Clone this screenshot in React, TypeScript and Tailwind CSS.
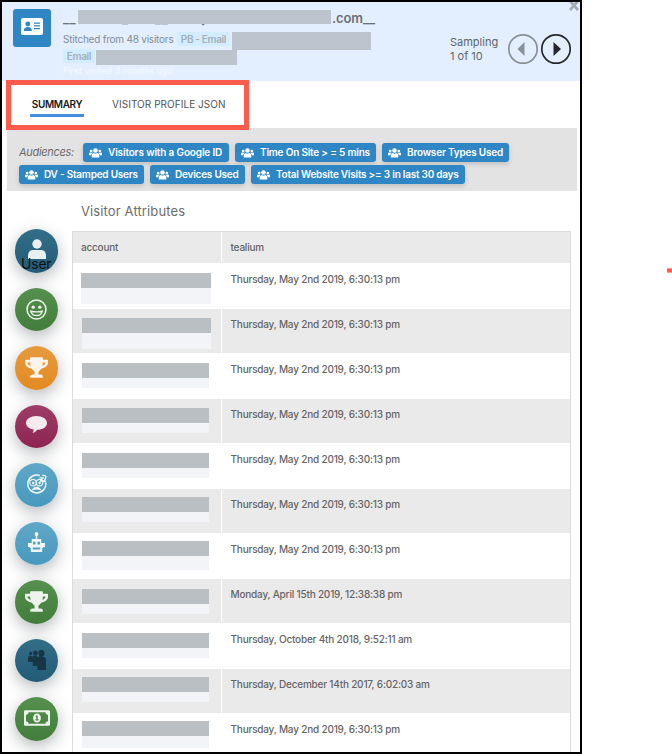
import React from "react";
import { FaRegMoneyBillAlt, FaTrophy } from "react-icons/fa";

const UsersIcon = () => (
  <svg width="13" height="10" viewBox="0 0 26 20" fill="currentColor" className="shrink-0">
    <circle cx="13" cy="5" r="4.6" />
    <path d="M5.5 19v-3.500c0-3.600 2-5.300 4.500-5.300 1.700 1.400 4.300 1.400 6 0 2.500 0 4.500 1.700 4.500 5.300V19z" />
    <circle cx="4.300" cy="6" r="2.700" />
    <circle cx="21.700" cy="6" r="2.700" />
    <path d="M0 14.500V12c0-2 1-3 2.500-3 1.200.8 2.600.8 3.800 0l1 .4c-1.800 1.300-2.600 3-2.700 5.100zM26 14.500V12c0-2-1-3-2.500-3-1.200.8-2.600.8-3.800 0l-1 .4c1.800 1.300 2.600 3 2.700 5.100z" />
  </svg>
);

const Pill = ({ label, size }: { label: string; size: string }) => (
  <div className={`flex h-[19px] shrink-0 items-center gap-[6px] rounded-[3px] bg-[#2e86c5] pl-[6px] text-[10px] font-semibold whitespace-nowrap text-white shadow-[0_2px_5px_rgba(0,0,0,0.16)] ${size}`}>
    <UsersIcon />
    <span>{label}</span>
  </div>
);

const UserIcon = () => (
  <svg width="18" height="20" viewBox="0 0 18 20" fill="currentColor" className="-mt-[3px]">
    <circle cx="9" cy="5" r="4.700" />
    <path d="M0 20v-3c0-4 2-6 5-6h8c3 0 5 2 5 6v3z" />
  </svg>
);

const SmileIcon = () => (
  <svg width="21" height="21" viewBox="0 0 20 20" fill="none" stroke="currentColor" strokeWidth="1.500">
    <circle cx="10" cy="10" r="9" />
    <circle cx="6.800" cy="7.800" r="1.600" fill="currentColor" stroke="none" />
    <circle cx="13.200" cy="7.800" r="1.600" fill="currentColor" stroke="none" />
    <path d="M4.500 11.500c3.500 1 7.500 1 11 0-.6 2.600-2.800 4.200-5.500 4.200s-4.900-1.600-5.500-4.200z" strokeWidth="1.300" />
  </svg>
);

const BubbleIcon = () => (
  <svg width="21" height="17" viewBox="0 0 20 17" preserveAspectRatio="none" fill="currentColor" className="-mt-[3px]">
    <path d="M10 0c5.600 0 10 3 10 6.900s-4.400 6.900-9.400 6.900c-1 1.500-2.300 2.600-4.400 3.200.8-1.200 1.200-2.300 1.100-3.500C3 12.800 0 10.200 0 6.900 0 3 4.400 0 10 0z" />
  </svg>
);

const SleepyIcon = () => (
  <svg width="20" height="20" viewBox="0 0 20 20" fill="none" stroke="currentColor" strokeWidth="1.500" className="-mt-px">
    <path d="M12.800 1.500A9 9 0 1 0 18.700 8.500" />
    <circle cx="6" cy="8.700" r="3.200" strokeWidth="1.100" />
    <circle cx="12.500" cy="8.700" r="3.200" strokeWidth="1.100" />
    <circle cx="6.200" cy="9" r="1.200" fill="currentColor" stroke="none" />
    <circle cx="12.600" cy="9" r="1.200" fill="currentColor" stroke="none" />
    <path d="M12.500 3.800h3.500l-2.500 3.200h3.500M15.200 1.600c3-.8 4.500.6 3.200 3L17 7.500h2" strokeWidth="1.300" />
    <path d="M5.800 15.600c1.500-3 6-3 7.500 0-1.800-1-5.700-1-7.500 0z" strokeWidth="1.200" fill="currentColor" />
  </svg>
);

const RobotIcon = () => (
  <svg width="17" height="20" viewBox="0 0 18 20" preserveAspectRatio="none" fill="currentColor" className="-mt-[2px]">
    <circle cx="9" cy="2" r="2" />
    <path d="M8.200 3h1.600v4H8.200z" />
    <path
      fillRule="evenodd"
      d="M4 7h10v4h4v4h-2v1h-1v4H3v-4H2v-1H0v-4h4zM5.300 9.700v2.800H8V9.700zm4.700 0v2.800h2.700V9.700zM5 15.500v2h8v-2z"
    />
  </svg>
);

const PeopleIcon = () => (
  <svg width="18" height="20" viewBox="0 0 19 20" preserveAspectRatio="none" fill="#173545">
    <circle cx="2.800" cy="3.400" r="1.600" />
    <circle cx="7.800" cy="3" r="2.500" />
    <circle cx="14.200" cy="3.200" r="3.200" />
    <path d="M0 12V7.500C0 5.500 4 5 4.500 7c1-2 5-2 5.500.5 1.500-2 9-1.500 9 2V20H10v-4H5v-4z" />
  </svg>
);

const MENU: { tone: string; icon: React.ReactNode; label?: string }[] = [
  { tone: "from-[#336e88] to-[#215b76]", icon: <UserIcon />, label: "User" },
  { tone: "from-[#56904f] to-[#427d3b]", icon: <SmileIcon /> },
  { tone: "from-[#e69a3e] to-[#e28b20]", icon: <FaTrophy size={23} className="-mt-px" /> },
  { tone: "from-[#9e3d67] to-[#8c2451]", icon: <BubbleIcon /> },
  { tone: "from-[#60a7c7] to-[#4799be]", icon: <SleepyIcon /> },
  { tone: "from-[#60a7c7] to-[#4799be]", icon: <RobotIcon /> },
  { tone: "from-[#56904f] to-[#427d3b]", icon: <FaTrophy size={23} className="-mt-px" /> },
  { tone: "from-[#336e88] to-[#215b76]", icon: <PeopleIcon /> },
  { tone: "from-[#56904f] to-[#427d3b]", icon: <FaRegMoneyBillAlt size={26} className="-mt-px" /> },
];

const MAY = "Thursday, May 2nd 2019, 6:30:13 pm";
const ROWS = [
  { date: MAY, mask: "mt-[10px] ml-[8px] w-[130px]", tail: "h-[16px]" },
  { date: MAY, mask: "mt-[9px] ml-[9px] w-[129px]", tail: "h-[16px]" },
  { date: MAY, mask: "mt-[10px] ml-[9px] w-[127px]", tail: "h-[10px]" },
  { date: MAY, mask: "mt-[9px] ml-[9px] w-[127px]", tail: "h-[10px]" },
  { date: MAY, mask: "mt-[10px] ml-[9px] w-[127px]", tail: "h-[10px]" },
  { date: MAY, mask: "mt-[8px] ml-[9px] w-[127px]", tail: "h-[10px]" },
  { date: MAY, mask: "mt-[8px] ml-[9px] w-[127px]", tail: "h-[14px]" },
  { date: "Monday, April 15th 2019, 12:38:38 pm", mask: "mt-[10px] ml-[9px] w-[127px]", tail: "h-[10px]" },
  { date: "Thursday, October 4th 2018, 9:52:11 am", mask: "mt-[10px] ml-[9px] w-[127px]", tail: "h-[10px]" },
  { date: "Thursday, December 14th 2017, 6:02:03 am", mask: "mt-[8px] ml-[9px] w-[127px]", tail: "h-[10px]" },
  { date: MAY, mask: "mt-[8px] ml-[9px] w-[127px]", tail: "h-[12px]" },
];

const Header = () => (
  <header className="relative flex h-[79px] shrink-0 overflow-hidden bg-[#e3effe]">
    <div className="mt-[7px] ml-[11px] flex size-[38px] shrink-0 items-center justify-center rounded-[3px] bg-[#2e86c5]">
      <svg width="22" height="17" viewBox="0 0 22 17" className="-mt-[4px]">
        <rect width="22" height="17" rx="2" fill="#fff" />
        <g fill="#2e86c5">
          <circle cx="6.800" cy="6" r="2.400" />
          <path d="M2.800 13c0-3 1.500-4 4-4s4 1 4 4z" />
          <path d="M13 4.500h6v1.300h-6zM13 7.200h6v1.300h-6zM13 9.900h6v1.300h-6z" />
        </g>
      </svg>
    </div>
    <div className="ml-[12px] w-[370px] shrink-0 pt-[8px]">
      <div className="relative flex h-[17px] text-[13px] leading-[17px] font-semibold text-[#6c7176]">
        <span className="w-[15px] tracking-[0.5px]">__</span>
        <span className="w-[254px] overflow-hidden pl-[44px] whitespace-pre tracking-[0.5px]">_       __         j</span>
        <span className="tracking-[-0.1px]">.com__</span>
        <span className="absolute top-0 left-[15px] h-[14px] w-[253px] bg-[#bcc5cd]" />
      </div>
      <div className="mt-[5px] flex h-[18px] items-start">
        <span className="w-[114px] text-[10px] leading-[14px] tracking-[-0.22px] whitespace-nowrap text-[#818c99]">Stitched from 48 visitors</span>
        <span className="h-[14px] w-[53px] rounded-[2px] bg-[#d2edff] text-center text-[10px] leading-[14px] font-semibold tracking-[-0.35px] whitespace-nowrap text-[#a3afb9]">PB - Email</span>
        <span className="ml-[2px] h-[18px] w-[139px] bg-[#bcc5cd]" />
      </div>
      <div className="flex h-[15px] items-start">
        <span className="-mt-px h-[14px] w-[32px] rounded-[2px] bg-[#d2edff] text-center text-[10px] leading-[14px] font-semibold tracking-[-0.35px] text-[#a3afb9]">Email</span>
        <span className="ml-px h-[15px] w-[141px] bg-[#bcc5cd]" />
      </div>
      <div className="text-[9px] leading-[11px] text-[#f4f9ff] italic">First visited 3 months ago</div>
    </div>
    <div className="ml-[17px] w-[56px] pt-[33px] text-[11px] leading-[14px] whitespace-nowrap text-[#5f656c]">
      <div>Sampling</div>
      <div>1 of 10</div>
    </div>
    <svg width="65" height="32" viewBox="0 0 65 32" className="mt-[31px] shrink-0">
      <circle cx="17" cy="16" r="14.200" fill="none" stroke="#8a9099" strokeWidth="1.700" />
      <path d="M11.500 16l7-7v14z" fill="#8a9099" />
      <circle cx="50" cy="16" r="14.200" fill="none" stroke="#24282e" strokeWidth="1.700" />
      <path d="M55 16l-7.500-7v14z" fill="#24282e" />
    </svg>
    <svg width="10" height="9" viewBox="0 0 10 9" className="absolute top-0 right-px">
      <path d="M1 -1l8 9M9 -1l-8 9" stroke="#a4abb3" strokeWidth="2.800" />
    </svg>
  </header>
);

export default function App() {
  return (
    <div className="relative h-[754px] w-[672px] overflow-hidden bg-white font-['Inter','Liberation_Sans',sans-serif]">
      <div className="flex h-[754px] w-[582px] flex-col border-2 border-black">
        <Header />
        <nav className="relative flex h-[47px] shrink-0 pt-[16px] text-[10px] leading-[14px] whitespace-nowrap">
          <div className="ml-[28px] h-[20px] w-[54px] border-b-[3px] border-[#438ee0] text-center font-semibold tracking-[-0.35px] text-[#17191c]">SUMMARY</div>
          <div className="ml-[28px] tracking-[0.05px] text-[#505458]">VISITOR PROFILE JSON</div>
          <div className="absolute -top-px left-[4px] z-10 h-[50px] w-[243px] border-[5px] border-[#ff5b4d]" />
        </nav>
        <section className="ml-[5px] flex h-[63px] w-[570px] shrink-0 flex-col gap-[3px] bg-[#e3e3e3] pt-[15px] pl-[12px]">
          <div className="flex gap-[6px]">
            <span className="w-[58px] text-[11px] leading-[19px] tracking-[-0.3px] text-[#6a6a6a] italic">Audiences:</span>
            <Pill label="Visitors with a Google ID" size="w-[146px] tracking-[-0.15px]" />
            <Pill label="Time On Site > = 5 mins" size="w-[141px] tracking-[-0.2px]" />
            <Pill label="Browser Types Used" size="w-[127px] tracking-[-0.2px]" />
          </div>
          <div className="flex gap-[6px]">
            <Pill label="DV - Stamped Users" size="w-[125px] tracking-[-0.22px]" />
            <Pill label="Devices Used" size="w-[95px] tracking-[-0.22px]" />
            <Pill label="Total Website Visits >= 3 in last 30 days" size="w-[214px] tracking-[-0.24px]" />
          </div>
        </section>
        <main className="flex min-h-0 flex-1 overflow-hidden">
          <aside className="flex w-[70px] shrink-0 flex-col gap-[15px] pt-[38px] pl-[13px]">
            {MENU.map((item, i) => (
              <div key={i} className={`relative flex h-[43.500px] w-[43px] shrink-0 items-center justify-center rounded-full bg-linear-to-b text-white/90 shadow-[0_5px_16px_rgba(38,50,56,0.35)] ${item.tone}`}>
                {item.icon}
                {item.label && <span className="absolute top-[27px] left-[6px] text-[14px] leading-[16px] tracking-[-0.2px] text-[#111]">{item.label}</span>}
              </div>
            ))}
          </aside>
          <div className="w-[499px] shrink-0">
            <h2 className="h-[40px] pt-[10px] pl-[9px] text-[13px] leading-[20px] tracking-[0.12px] text-[#6c6c6c]">Visitor Attributes</h2>
            <div className="border border-[#dadcdd] text-[10px] leading-[14px] font-medium tracking-[-0.2px] text-[#656565]">
              <div className="flex h-[31px] bg-[#eaeaea]">
                <div className="w-[149px] border-r border-white pt-[8px] pl-[8px]">account</div>
                <div className="pt-[8px] pl-[8.500px]">tealium</div>
              </div>
              {ROWS.map((row, i) => (
                <div key={i} className="flex odd:h-[44px] odd:bg-[#eaeaea] even:h-[46px]">
                  <div className="w-[149px] border-r border-white">
                    <div className={row.mask}>
                      <div className="h-[15px] bg-[#b9bfc3]" />
                      <div className={`bg-[#f3f4f7] ${row.tail}`} />
                    </div>
                  </div>
                  <div className={`pl-[8.500px] whitespace-nowrap ${i % 2 ? "pt-[8px]" : "pt-[9px]"}`}>{row.date}</div>
                </div>
              ))}
            </div>
          </div>
        </main>
      </div>
      <div className="absolute top-[268px] right-0 h-[5px] w-[5px] border-y border-[#ff9b94] bg-[#ff5b4d]" />
    </div>
  );
}
